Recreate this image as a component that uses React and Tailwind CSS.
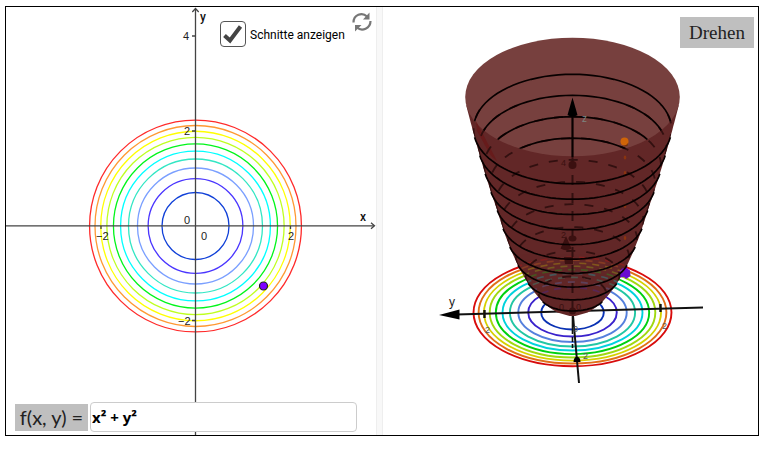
import React, { useState } from 'react';

// Contour lines, from level 1 (inside) to level 10 (outside)
const levels = [
  { k: 1, flat: '#1040d8', base: '#0a32b4' },
  { k: 2, flat: '#4a35ff', base: '#3a22cc' },
  { k: 3, flat: '#7a9fff', base: '#5580dd' },
  { k: 4, flat: '#33e6c4', base: '#22c6a4' },
  { k: 5, flat: '#00ffff', base: '#00d2dc' },
  { k: 6, flat: '#00f51a', base: '#00d010' },
  { k: 7, flat: '#bfff20', base: '#a0d810' },
  { k: 8, flat: '#ffff00', base: '#d6d000' },
  { k: 9, flat: '#ff9933', base: '#e07018' },
  { k: 10, flat: '#ff2a2a', base: '#d80c0c' }
];

// Projection of the paraboloid
const CX = 572.5;
const BASE_Y = 312;
const RX = 31.3;
const RY = 17.3;
const STEP = 18.3;
const RIM = 11.75;

const point = (k, t) => {
  const u = Math.sqrt(k);
  // slightly wider towards the tip
  const widen = 1 + 0.09 * Math.max(0, 1 - k / 6);
  const x = CX + RX * widen * u * Math.cos(t);
  const y = BASE_Y - STEP * k + RY * u * Math.sin(t);
  return `${x.toFixed(1)} ${y.toFixed(1)}`;
};

const arc = (k, from, to, n = 48) =>
  Array.from({ length: n + 1 }, (_, i) => point(k, from + ((to - from) * i) / n)).join(' L');

// Angle at which a section touches the outline of the surface
const edge = (k) => Math.asin(Math.min(1, RY / (2 * STEP * Math.sqrt(k))));

const frontArc = (k) => `M${arc(k, edge(k), Math.PI - edge(k))}`;
const backArc = (k) => `M${arc(k, Math.PI - edge(k), 2 * Math.PI + edge(k))}`;

const heights = Array.from({ length: 60 }, (_, i) => 0.23 + ((RIM - 0.23) * i) / 59);
const rightSide = heights.map((k) => point(k, edge(k)));
const leftSide = heights.map((k) => point(k, Math.PI - edge(k))).reverse();
const bodyPath = `M${leftSide.join(' L')} L${rightSide.join(' L')} Z`;

const ContourPlot = () => (
  <svg viewBox="6 7 370 428" className="block h-auto w-full" role="img" aria-label="Höhenlinien">
    {levels.map(({ k, flat }) => (
      <circle key={k} cx="195.5" cy="226" r={33.5 * Math.sqrt(k)} fill="none" stroke={flat} strokeWidth="1.3" />
    ))}

    {/* Axes */}
    <g stroke="#444" strokeWidth="1.3" fill="none">
      <path d="M6 225.8H374M195.5 435V9" />
      <path d="M371 222.8L374.5 225.8L371 228.8M192.3 12L195.5 8.5L198.7 12" />
      <path d="M192 36H195.5M192 131H195.5M192 320.5H195.5M101 226V229M290.5 226V229" />
    </g>

    <g fontFamily="Liberation Sans, sans-serif" fontSize="11" fill="#222">
      <text x="183" y="40">4</text>
      <text x="184" y="135">2</text>
      <text x="184" y="224">0</text>
      <text x="201" y="240">0</text>
      <text x="96" y="240">−2</text>
      <text x="288" y="240">2</text>
      <text x="178" y="325">−2</text>
    </g>
    <g fontFamily="Roboto, sans-serif" fontSize="12" fontWeight="500" fill="#111">
      <text x="360" y="221">x</text>
      <text x="200" y="21">y</text>
    </g>
    <circle cx="263.5" cy="286" r="4" fill="#7d00ff" stroke="#222" strokeWidth="1.2" />
  </svg>
);

const SurfacePlot = () => (
  <svg viewBox="383 7 375 428" className="block h-auto w-full" role="img" aria-label="Paraboloid">
    <defs>
      <clipPath id="body">
        <path d={bodyPath} />
      </clipPath>
      <clipPath id="opening">
        <ellipse cx={CX} cy={BASE_Y - STEP * RIM} rx={RX * Math.sqrt(RIM)} ry={RY * Math.sqrt(RIM)} />
      </clipPath>
    </defs>

    {/* Contour lines on the ground plane */}
    {levels.map(({ k, base }) => (
      <ellipse
        key={k}
        cx={CX}
        cy="312.5"
        rx={RX * Math.sqrt(k)}
        ry={17 * Math.sqrt(k)}
        fill="none"
        stroke={base}
        strokeWidth="1.9"
      />
    ))}

    <g stroke="#111" strokeWidth="2" fill="none">
      <path d="M456 314.6L703 307.5" />
      <path d="M572.5 310L579 383" />
      <path d="M572.5 316V334M572.5 337V342M572.5 344V348" strokeWidth="1.6" />
      <path d="M484.5 310V318M660.5 304V312" strokeWidth="2.4" />
    </g>
    <path d="M439 315L459.5 309.5V319.5Z" fill="#000" />
    <path d="M573.5 362C573.5 355 580.5 355 580.5 362Z" fill="#000" />

    {/* Surface */}
    <path d={bodyPath} fill="#622727" />
    <ellipse
      cx={CX}
      cy={BASE_Y - STEP * RIM}
      rx={RX * Math.sqrt(RIM)}
      ry={RY * Math.sqrt(RIM)}
      fill="#77403e"
    />
    <path d="M476 121L497 161L491 156L477 131Z" fill="#671b1b" />
    <path d="M619 272L622 268.5L626 267.5L630 270.5L630.5 276L626 279L624 277L620 277.5Z" fill="#6a0bd0" />

    {/* Ground plane showing through the surface */}
    <g clipPath="url(#body)" opacity="0.28" strokeDasharray="7 6">
      {levels.slice(1).map(({ k, base }) => (
        <path
          key={k}
          d={`M${arc(k, Math.PI, 2 * Math.PI)}`}
          transform={`translate(0 ${STEP * k})`}
          fill="none"
          stroke={base}
          strokeWidth="1.6"
        />
      ))}
    </g>

    <g clipPath="url(#body)" fill="none" stroke="#321010" strokeWidth="1.8">
      {levels.map(({ k }) => (
        <path key={k} d={backArc(k)} strokeDasharray="9 11" />
      ))}
      <path d="M572.5 157V312" strokeDasharray="10 8" strokeWidth="2" />
    </g>
    <g fill="#3b1010">
      <circle cx="572.5" cy="165" r="4" />
      <ellipse cx="572.5" cy="238.5" rx="4" ry="3" />
      <path d="M566 236L560.5 248.5Q566 252 571.5 248.5Z" />
      <path d="M564 257H573V264H565Z" />
      <circle cx="572.5" cy="311" r="3.5" />
    </g>
    <g fill="#8a3410">
      <ellipse cx="625" cy="157.5" rx="1.3" ry="2" />
      <ellipse cx="625" cy="173" rx="1.3" ry="2" />
      <ellipse cx="625" cy="206" rx="1.3" ry="2" />
      <ellipse cx="625" cy="238" rx="1.3" ry="2" />
    </g>

    {/* Sections */}
    <g fill="none" stroke="#080000" strokeWidth="1.7">
      {levels.map(({ k }) => (
        <path key={k} d={frontArc(k)} />
      ))}
      <g clipPath="url(#opening)">
        {levels.slice(6).map(({ k }) => (
          <path key={k} d={backArc(k)} />
        ))}
      </g>
      <path d="M572.5 112V157" strokeWidth="2.2" />
    </g>
    <path d="M572.5 97.5L577.5 115Q572.5 118 567.5 115Z" fill="#000" />
    <circle cx="624.5" cy="141.5" r="4" fill="#cf6408" />
    <path d="M622 145.5Q626 146.5 628 143L627.5 146L624 146.5Z" fill="#743208" />

    <g fontFamily="Liberation Sans, sans-serif" fontSize="9" fill="#555">
      <text x="449" y="306" fontSize="12" fill="#222">y</text>
      <text x="582" y="122" fontSize="10" fill="#7d8580">z</text>
      <text x="561" y="166" fill="#3b1010">4</text>
      <text x="561" y="238" fill="#3b1010">2</text>
      <text x="559" y="310" fill="#3b1010">0</text>
      <text x="576" y="310" fill="#3b1010">0</text>
      <text x="573" y="332">0</text>
      <text x="583" y="359">2</text>
      <text x="485" y="333">2</text>
      <text x="662" y="329">2</text>
    </g>
  </svg>
);

const App = () => {
  const [showSections, setShowSections] = useState(true);
  const [term, setTerm] = useState('x² + y²');

  return (
    <main className="bg-white pt-[6px] pr-[9px] pl-[5px]">
      <div className="flex border border-black">
        <section className="relative min-w-0 flex-[370]">
          <ContourPlot />

          <div className="absolute top-3.5 right-3.5 left-[214px] flex items-start gap-1">
            <span className="relative h-[26px] w-[26px] shrink-0">
              <input
                id="sections"
                type="checkbox"
                checked={showSections}
                onChange={(e) => setShowSections(e.target.checked)}
                className="peer block h-[26px] w-[26px] appearance-none rounded border border-[#555] bg-white"
              />
              <svg
                viewBox="0 0 26 26"
                className="pointer-events-none absolute inset-0 hidden peer-checked:block"
                fill="none"
                stroke="#444"
                strokeWidth="4"
              >
                <path d="M4.5 14.5L10 19.5L20.5 5.5" />
              </svg>
            </span>
            <label
              htmlFor="sections"
              className="font-['Roboto',sans-serif] text-[12px] leading-7 whitespace-nowrap text-black"
            >
              Schnitte anzeigen
            </label>
          </div>

          <button type="button" aria-label="Zurücksetzen" className="absolute top-[5px] right-1 h-5 w-5">
            <svg viewBox="0 0 20 20" className="h-5 w-5" fill="none" stroke="#777" strokeWidth="2.2">
              <path d="M1.5 10.5C1.5 3 10 -0.5 15 4.5" />
              <path d="M18.5 9C18.5 16.5 10 20 5 15.5" />
              <path d="M17.5 0.5V7.5H11Z" fill="#777" stroke="none" />
              <path d="M3 19.5V13H9.5Z" fill="#777" stroke="none" />
            </svg>
          </button>

          <div className="absolute right-[19px] bottom-[3px] left-[9px] flex items-center gap-0.5">
            <label
              htmlFor="term"
              className="w-[73px] shrink-0 bg-[#bfbfbf] text-center font-['Lato',sans-serif] text-[20px] leading-[27px] whitespace-nowrap text-[#222]"
            >
              f(x, y) =
            </label>
            <input
              id="term"
              type="text"
              value={term}
              onChange={(e) => setTerm(e.target.value)}
              className="h-[30px] min-w-0 flex-1 rounded border border-[#ccc] bg-white px-px font-['Open_Sans',sans-serif] text-[15px] font-bold text-black outline-none"
            />
          </div>
        </section>

        <div className="w-[7px] shrink-0 border-x border-[#eee] bg-[#f8f8f8]" />

        <section className="relative min-w-0 flex-[375]">
          <SurfacePlot />
          <button
            type="button"
            className="absolute top-2.5 right-1 w-[74px] bg-[#bfbfbf] text-center font-['Liberation_Serif',serif] text-[19px] leading-[31px] text-[#222]"
          >
            Drehen
          </button>
        </section>
      </div>
    </main>
  );
};

export default App;
